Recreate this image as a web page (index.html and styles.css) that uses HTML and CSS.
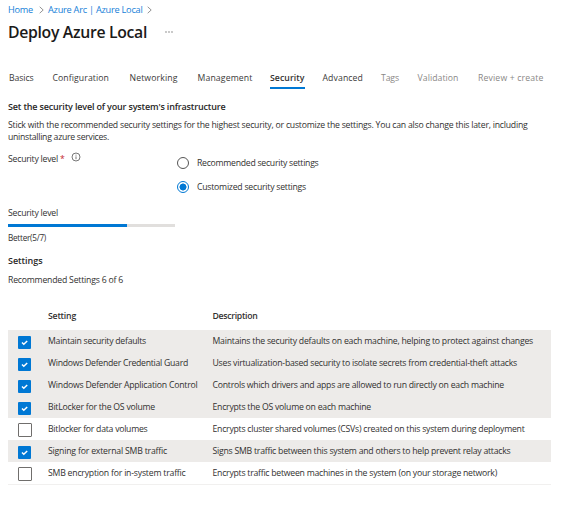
FILE: index.html
```html
<!DOCTYPE html>
<html lang="en">
<head>
<meta charset="utf-8">
<title>Deploy Azure Local</title>
<link rel="stylesheet" href="styles.css">
</head>
<body>
<nav class="crumbs">
  <a><span class="t" data-w="25">Home</span></a>
  <svg class="chev" viewBox="0 0 5 8"><path d="M.7.8 4.2 4 .7 7.2"/></svg>
  <a><span class="t" data-w="94.5">Azure Arc | Azure Local</span></a>
  <svg class="chev" viewBox="0 0 5 8"><path d="M.7.8 4.2 4 .7 7.2"/></svg>
</nav>
<header class="title">
  <h1><span class="t" data-w="139">Deploy Azure Local</span></h1>
  <svg class="more" viewBox="0 0 8 2"><circle cx="1" cy="1" r=".65"/><circle cx="4" cy="1" r=".65"/><circle cx="7" cy="1" r=".65"/></svg>
</header>
<div class="tabs">
  <a class="tab basics"><span class="t" data-w="24.5">Basics</span></a>
  <a class="tab configuration"><span class="t" data-w="56.5">Configuration</span></a>
  <a class="tab networking"><span class="t" data-w="48">Networking</span></a>
  <a class="tab management"><span class="t" data-w="55">Management</span></a>
  <a class="tab security active"><span class="t" data-w="34.5">Security</span></a>
  <a class="tab advanced"><span class="t" data-w="40.5">Advanced</span></a>
  <a class="tab tags muted"><span class="t" data-w="18">Tags</span></a>
  <a class="tab validation muted"><span class="t" data-w="41">Validation</span></a>
  <a class="tab review muted"><span class="t" data-w="65.5">Review + create</span></a>
</div>
<main>
  <h2 class="lead"><span class="t" data-w="217.5">Set the security level of your system's infrastructure</span></h2>
  <p class="intro"><span class="t" data-w="519.5">Stick with the recommended security settings for the highest security, or customize the settings. You can also change this later, including</span><br><span class="t" data-w="101">uninstalling azure services.</span></p>
  <div class="field">
    <div class="label"><span class="t" data-w="50">Security level</span> <b class="req">*</b>
      <svg class="info" viewBox="0 0 10 10"><circle cx="5" cy="5" r="4"/><path d="M5 4.4v2.8M5 2.7v.9"/></svg>
    </div>
    <div class="options">
      <label class="option"><i class="radio"></i><span class="t" data-w="121.5">Recommended security settings</span></label>
      <label class="option"><i class="radio on"></i><span class="t" data-w="109">Customized security settings</span></label>
    </div>
  </div>
  <div class="level"><span class="t" data-w="50">Security level</span></div>
  <div class="bar"><div class="fill"></div></div>
  <div class="score"><span class="t" data-w="38">Better(5/7)</span></div>
  <h2 class="settings"><span class="t" data-w="34.5">Settings</span></h2>
  <div class="count"><span class="t" data-w="115">Recommended Settings 6 of 6</span></div>
  <div class="grid">
    <div class="row head"><span></span><b><span class="t" data-w="28">Setting</span></b><b><span class="t" data-w="45">Description</span></b></div>
    <div class="row on"><i class="box"><svg viewBox="0 0 13 13"><path d="m4 6.5 1.8 1.8L9.2 5"/></svg></i><span><span class="t" data-w="98">Maintain security defaults</span></span><span><span class="t" data-w="320.5">Maintains the security defaults on each machine, helping to protect against changes</span></span></div>
    <div class="row on"><i class="box"><svg viewBox="0 0 13 13"><path d="m4 6.5 1.8 1.8L9.2 5"/></svg></i><span><span class="t" data-w="140">Windows Defender Credential Guard</span></span><span><span class="t" data-w="304.5">Uses virtualization-based security to isolate secrets from credential-theft attacks</span></span></div>
    <div class="row on"><i class="box"><svg viewBox="0 0 13 13"><path d="m4 6.5 1.8 1.8L9.2 5"/></svg></i><span><span class="t" data-w="149.5">Windows Defender Application Control</span></span><span><span class="t" data-w="291.5">Controls which drivers and apps are allowed to run directly on each machine</span></span></div>
    <div class="row on"><i class="box"><svg viewBox="0 0 13 13"><path d="m4 6.5 1.8 1.8L9.2 5"/></svg></i><span><span class="t" data-w="107">BitLocker for the OS volume</span></span><span><span class="t" data-w="158.5">Encrypts the OS volume on each machine</span></span></div>
    <div class="row"><i class="box"></i><span><span class="t" data-w="99.5">Bitlocker for data volumes</span></span><span><span class="t" data-w="312">Encrypts cluster shared volumes (CSVs) created on this system during deployment</span></span></div>
    <div class="row on"><i class="box"><svg viewBox="0 0 13 13"><path d="m4 6.5 1.8 1.8L9.2 5"/></svg></i><span><span class="t" data-w="119">Signing for external SMB traffic</span></span><span><span class="t" data-w="298">Signs SMB traffic between this system and others to help prevent relay attacks</span></span></div>
    <div class="row"><i class="box"></i><span><span class="t" data-w="137.5">SMB encryption for in-system traffic</span></span><span><span class="t" data-w="284.5">Encrypts traffic between machines in the system (on your storage network)</span></span></div>
  </div>
</main>
<script src="fit.js"></script>
</body>
</html>
```
FILE: fit.js
```js
document.querySelectorAll('.t').forEach(function (el) {
  var gap = (Number(el.dataset.w) - el.getBoundingClientRect().width) / el.textContent.length;
  el.style.letterSpacing = gap.toFixed(4) + 'px';
});
```
FILE: styles.css
```css
* { box-sizing: border-box; }
body {
  margin: 0;
  width: 562px;
  height: 526px;
  padding: 3px 0 0 8px;
  overflow: hidden;
  background: #fff;
  color: #323130;
  font: 8.7px/12px "Open Sans", "Noto Sans", sans-serif;
}
h1, h2, p { margin: 0; }
.t { white-space: nowrap; }
.crumbs { display: flex; align-items: center; height: 13px; color: #1580d8; font-size: 9.2px; }
.chev { width: 5px; height: 8px; margin: 1px 4px 0 6px; fill: none; stroke: #777; stroke-width: .8; }
.chev:last-child { margin-left: 4px; }
.title { display: flex; align-items: center; height: 32px; }
h1 { font-size: 15.8px; line-height: 24px; font-weight: 600; color: #1b1a19; }
.more { width: 8px; height: 2px; margin-left: 18px; fill: #666; }
.tabs { display: flex; height: 27px; margin-top: 15px; }
.tab { height: 27px; padding: 9px 0 0; color: #3b3a39; }
.basics { margin-left: 1px; }
.configuration { margin-left: 19px; }
.networking { margin-left: 20.5px; }
.management { margin-left: 20px; }
.security { margin-left: 17px; padding-left: .5px; }
.advanced { margin-left: 18px; }
.tags { margin-left: 18px; }
.validation { margin-left: 18.5px; }
.review { margin-left: 19.5px; }
.active { border-bottom: 2px solid #0078d4; font-weight: 600; color: #323130; }
.tab.active { height: 26px; }
.muted { color: #8a8886; }
h2 { font-size: 9px; line-height: 12px; font-weight: 600; color: #292827; }
.lead { margin-top: 11px; }
.intro { margin-top: 7px; line-height: 11.5px; }
.field { display: flex; margin-top: 9px; height: 46px; }
.label { width: 169px; display: flex; padding-top: 1px; }
.req { margin-left: 2px; color: #c4262c; font-weight: 400; }
.info { width: 10px; height: 10px; margin: -1px 0 0 6px; fill: none; stroke: #555; stroke-width: .8; }
.options { display: flex; flex-direction: column; gap: 12px; padding-top: 5px; }
.option { display: flex; align-items: center; gap: 8px; height: 12px; }
.radio { width: 12px; height: 12px; border: 1px solid #555; border-radius: 50%; }
.radio.on { border-color: #0078d4; background: radial-gradient(circle, #0078d4 3.2px, #fff 3.8px); }
.level { margin-top: 9px; }
.bar { width: 166.5px; height: 3px; margin-top: 5px; background: #e1dfdd; }
.fill { width: 71.5%; height: 3px; background: #0078d4; }
.score { margin-top: 5px; font-size: 8.2px; }
.settings { margin-top: 11px; }
.count { margin-top: 7px; }
.grid { width: 543px; margin-top: 16px; }
.row { display: grid; grid-template-columns: 40px 164.5px 1fr; height: 22px; padding-top: 5px; }
.row.head { height: 28px; padding-top: 8px; }
.row b { font-weight: 600; }
.row.on { background: #edebe9; }
.row:last-child { height: 23px; border-bottom: 1px solid #f1f0ef; }
.box { width: 14px; height: 14px; margin-left: 10px; border: 1px solid #706e6c; border-radius: 1px; background: #fff; }
.on .box { width: 13px; height: 13px; margin-top: 1px; border: 0; background: #0078d4; }
.box svg { display: block; width: 13px; height: 13px; fill: none; stroke: #fff; stroke-width: 1.5; }
```
